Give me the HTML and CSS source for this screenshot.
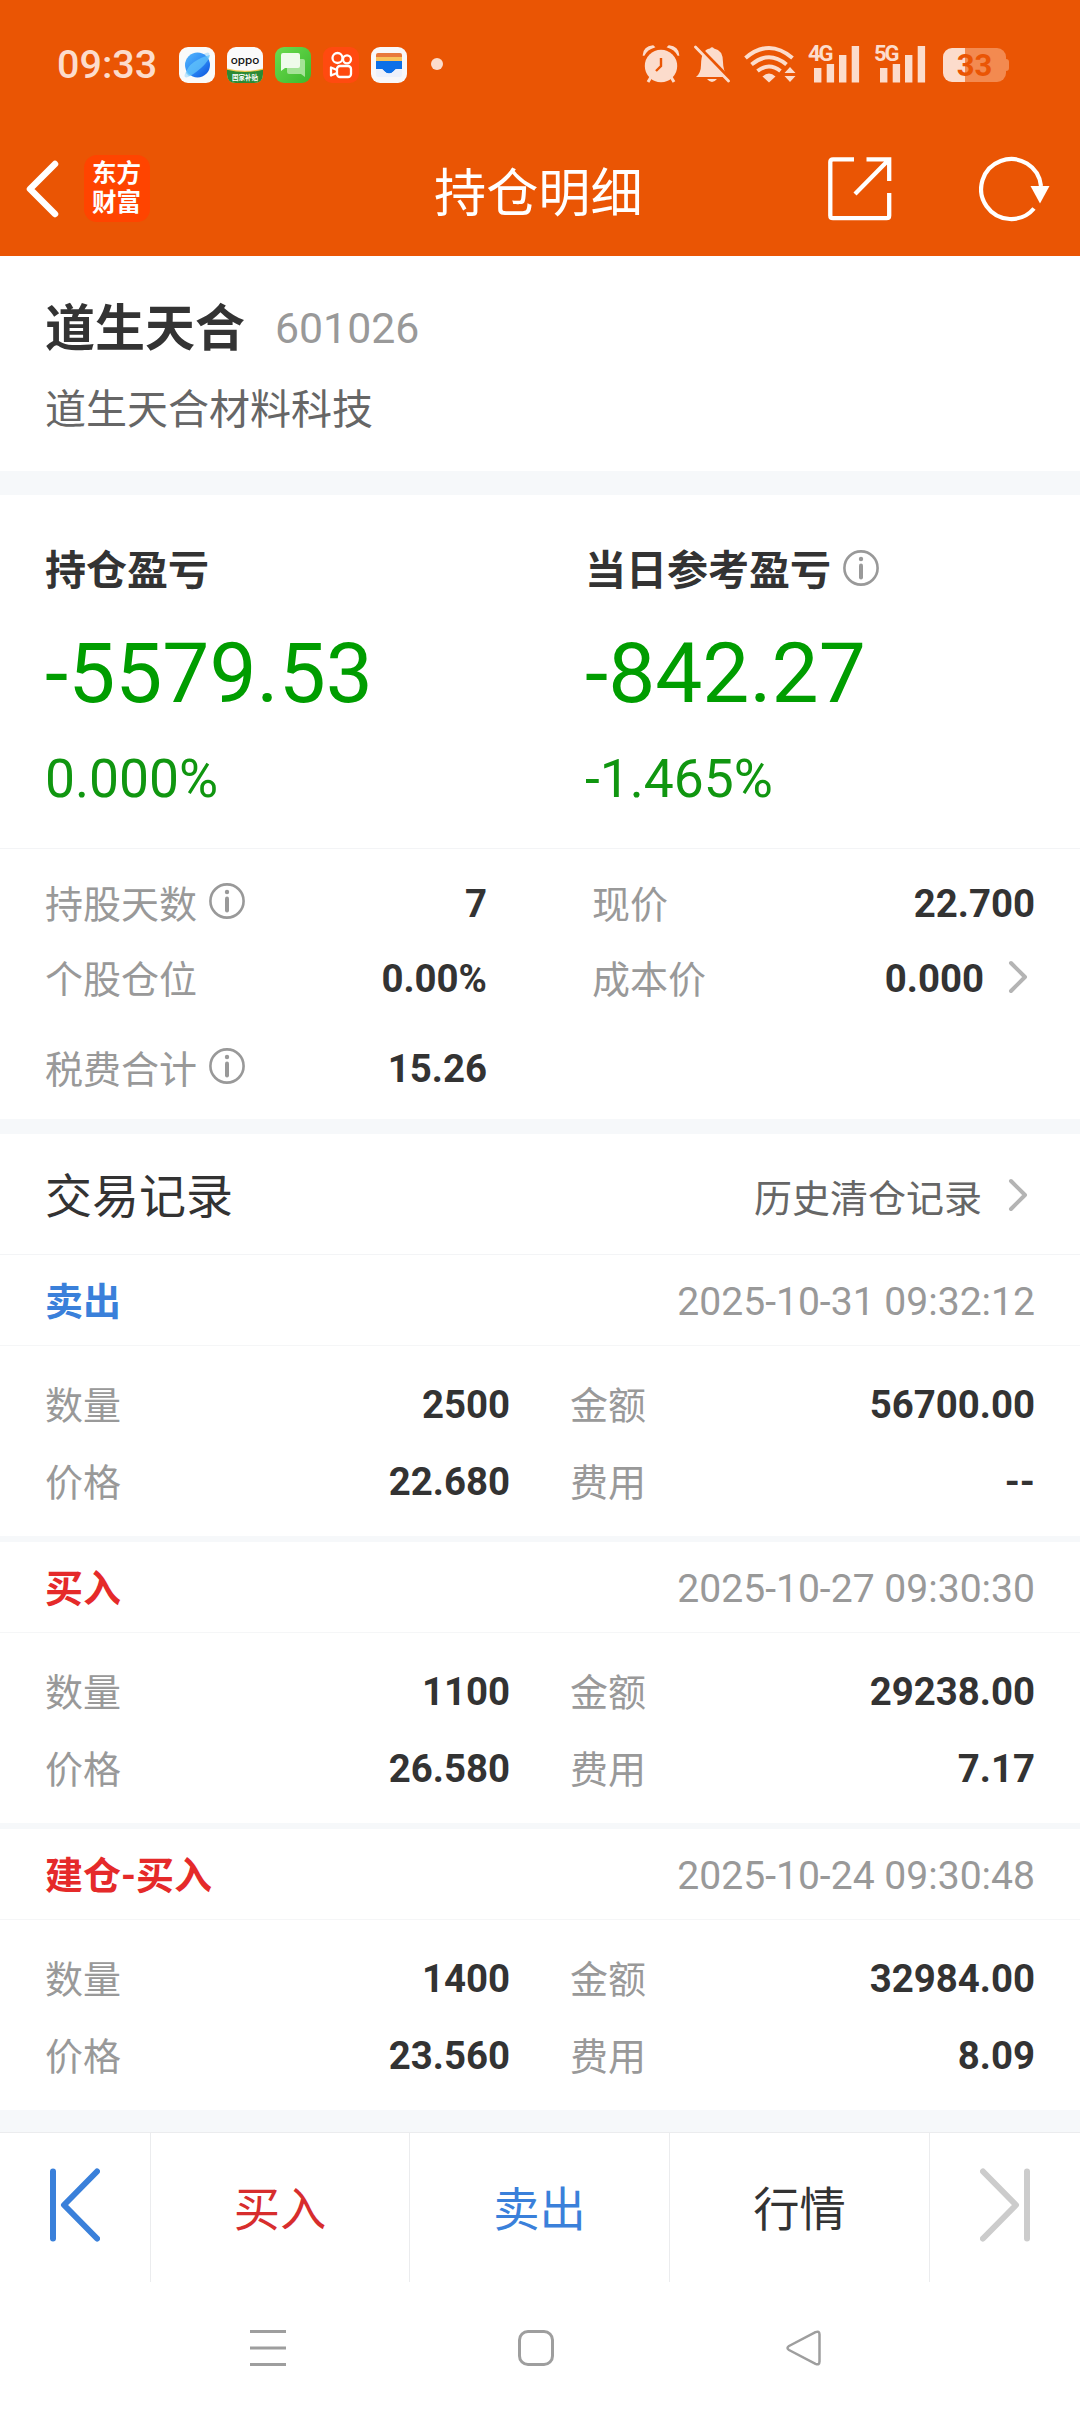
FILE: index.html
```html
<!DOCTYPE html>
<html lang="zh-CN">
<head>
<meta charset="utf-8">
<title>持仓明细</title>
<link rel="stylesheet" href="styles.css">
</head>
<body>
<svg width="0" height="0" class="defs">
  <symbol id="info" viewBox="0 0 36 36"><circle cx="18" cy="18" r="16.6" fill="none" stroke="#999" stroke-width="2.6"/><circle cx="18" cy="9" r="2.2" fill="#999"/><path d="M18 15.5v12" stroke="#999" stroke-width="4" stroke-linecap="round"/></symbol>
  <symbol id="more" viewBox="0 0 20 34"><path d="M3 3l14 14L3 31" fill="none" stroke="#b4b4b4" stroke-width="4" stroke-linecap="round" stroke-linejoin="round"/></symbol>
  <symbol id="bars" viewBox="0 0 52 38"><path d="M6 23h7.4v14.5H6zM18.700 19h7.400v18.500h-7.400zM31 10h7.400v27.500H31zM43.700 1h7.400v36.500h-7.400z" fill="#fcdccc"/></symbol>
</svg>
<header class="top">
  <div class="status">
    <span class="clock">09:33</span>
    <div class="apps">
      <svg width="36" height="36" viewBox="0 0 36 36"><defs><linearGradient id="pl" x1="0" y1="0" x2="1" y2="1"><stop offset="0" stop-color="#58b8fb"/><stop offset=".5" stop-color="#2f8df6"/><stop offset="1" stop-color="#0a4fdc"/></linearGradient></defs><rect width="36" height="36" rx="9" fill="#fafafa"/><ellipse cx="18" cy="18" rx="17" ry="4.500" transform="rotate(-45 18 18)" fill="#c3e5fb"/><circle cx="18.500" cy="18" r="12.500" fill="url(#pl)"/><path d="M7 26Q8 20 15 15T31 8Q30 14 22 21T10 29z" fill="#63c4fb" opacity=".75"/></svg>
      <svg width="36" height="36" viewBox="0 0 36 36"><rect width="36" height="36" rx="9" fill="#fafafa"/><path d="M0 21.500Q18 26 36 21.500V27q0 9-9 9H9q-9 0-9-9z" fill="#f0c84c"/><path d="M0 22.700Q18 27.200 36 22.700V27q0 9-9 9H9q-9 0-9-9z" fill="#2c8a34"/><text transform="translate(3.700 16.800) scale(1.300 1)" textLength="22" lengthAdjust="spacingAndGlyphs" class="oppo">oppo</text><text x="5" y="33" textLength="26" class="subsidy">国家补贴</text></svg>
      <svg width="36" height="36" viewBox="0 0 36 36"><defs><linearGradient id="gr" x1="0" y1="0" x2="1" y2="1"><stop offset="0" stop-color="#6cdc50"/><stop offset="1" stop-color="#3cb82c"/></linearGradient></defs><rect width="36" height="36" rx="9" fill="url(#gr)"/><path d="M14 12h14q2 0 2 2v16l-4-3H14q-2 0-2-2V14q0-2 2-2z" fill="#a5e396"/><path d="M8 6h15q2 0 2 2v11q0 2-2 2H10l-4 3V8q0-2 2-2z" fill="#effbea"/></svg>
      <svg width="36" height="36" viewBox="0 0 36 36"><rect width="36" height="36" rx="9" fill="#ff4a10"/><g fill="none" stroke="#fff" stroke-width="2.300" stroke-linejoin="round"><circle cx="14.500" cy="11" r="5"/><circle cx="24" cy="12.300" r="4"/><rect x="14" y="19" width="14" height="11" rx="3"/><path d="M14 23l-6-2.500v8l6-2.500"/></g></svg>
      <svg width="36" height="36" viewBox="0 0 36 36"><rect width="36" height="36" rx="9" fill="#f8f8fa"/><path d="M5 10V8q0-2 2-2h22q2 0 2 2v2z" fill="#e8793c"/><path d="M5 10h26v4H5z" fill="#f8c35c"/><path d="M5 14h26v8h-5q-2 0-3 2-5 5-10 0-1-2-3-2H5z" fill="#0c70e8"/><path d="M5 22h5q2 0 3 2 5 5 10 0 1-2 3-2h5v6q0 2-2 2H7q-2 0-2-2z" fill="#edf1fb"/></svg>
    </div>
    <i class="dot"></i>
    <svg class="alarm" width="38" height="38" viewBox="0 0 38 38"><g fill="#fcdccc"><circle cx="19" cy="21" r="16.200"/><path d="M1.500 10Q2 2 11 1L12 2Q5 4 2 10zM36.500 10Q36 2 27 1L26 2q7 2 10 8z" stroke="#fcdccc" stroke-width="1.500"/><path d="M9 32l-3 5M29 32l3 5" stroke="#fcdccc" stroke-width="3"/></g><path d="M19 13v8l-5 5" fill="none" stroke="#ea5504" stroke-width="2.400"/></svg>
    <svg class="bell" width="36" height="38" viewBox="0 0 36 38"><g fill="#fcdccc"><path d="M2 32q5-4 5-12 0-15 9-16.500Q18 1 20 3.500 29 5 29 17q0 9 5 15zM13 34h10q-5 6-10 0z"/></g><path d="M1.500 -1l35 36" stroke="#ea5504" stroke-width="4"/><path d="M1.500 2l33 34" stroke="#fcdccc" stroke-width="2.800" stroke-linecap="round"/></svg>
    <svg class="wifi" width="52" height="38" viewBox="0 0 52 38"><g fill="none" stroke="#fcdccc" stroke-width="4"><path d="M1.500 13Q25 -7 48.500 13M7.500 19.500Q25 5 42.500 19.500M13.500 26Q25 17 36.500 26"/></g><path d="M18.500 31.500q6.500-6 13 0L25 37.500zM40.500 28l5.500-6 5.500 6zM40.500 31h11L46 37z" fill="#fcdccc"/></svg>
    <div class="signal"><span>4G</span><svg width="52" height="38"><use href="#bars"/></svg></div>
    <div class="signal"><span>5G</span><svg width="52" height="38"><use href="#bars"/></svg></div>
    <div class="battery"><span>33</span></div>
  </div>
  <nav class="nav">
    <svg class="back" width="36" height="60" viewBox="0 0 36 60"><path d="M30 5L5 30l25 25" fill="none" stroke="#fff" stroke-width="6.500" stroke-linecap="round" stroke-linejoin="round"/></svg>
    <div class="logo">东方<br>财富</div>
    <h1>持仓明细</h1>
    <svg class="share" width="64" height="64" viewBox="0 0 64 64"><path d="M26 2.300H5q-2.700 0-2.700 2.700v53.500q0 2.700 2.700 2.700h53.500q2.700 0 2.700-2.700V36M38.500 2.300h22.700V24M61 2.500L27 37" fill="none" stroke="#fff" stroke-width="4.300"/></svg>
    <svg class="refresh" width="72" height="66" viewBox="0 0 72 66"><path d="M55 52.500A30 30 0 1 1 62 30" fill="none" stroke="#fff" stroke-width="4.200"/><path d="M51.500 30h19L61 47.500z" fill="#fff"/></svg>
  </nav>
</header>
<main>
  <section class="stock">
    <div class="name"><h2>道生天合</h2><span>601026</span></div>
    <p>道生天合材料科技</p>
  </section>
  <section class="profit">
    <div><h3>持仓盈亏</h3><p class="big">-5579.53</p><p class="pct">0.000%</p></div>
    <div><h3>当日参考盈亏<svg width="36" height="36"><use href="#info"/></svg></h3><p class="big">-842.27</p><p class="pct">-1.465%</p></div>
  </section>
  <section class="facts">
    <div class="row"><span>持股天数<svg width="36" height="36"><use href="#info"/></svg></span><b>7</b></div>
    <div class="row"><span>现价</span><b>22.700</b></div>
    <div class="row"><span>个股仓位</span><b>0.00%</b></div>
    <div class="row link"><span>成本价</span><b>0.000</b><svg width="20" height="34"><use href="#more"/></svg></div>
    <div class="row"><span>税费合计<svg width="36" height="36"><use href="#info"/></svg></span><b>15.26</b></div>
  </section>
  <section class="records">
    <h2>交易记录</h2>
    <a>历史清仓记录<svg width="20" height="34"><use href="#more"/></svg></a>
  </section>
  <article class="trade">
    <header><h3 class="sell">卖出</h3><time>2025-10-31 09:32:12</time></header>
    <div class="detail">
      <div class="row"><span>数量</span><b>2500</b></div><div class="row"><span>金额</span><b>56700.00</b></div>
      <div class="row"><span>价格</span><b>22.680</b></div><div class="row"><span>费用</span><b>--</b></div>
    </div>
  </article>
  <article class="trade">
    <header><h3>买入</h3><time>2025-10-27 09:30:30</time></header>
    <div class="detail">
      <div class="row"><span>数量</span><b>1100</b></div><div class="row"><span>金额</span><b>29238.00</b></div>
      <div class="row"><span>价格</span><b>26.580</b></div><div class="row"><span>费用</span><b>7.17</b></div>
    </div>
  </article>
  <article class="trade">
    <header><h3>建仓-买入</h3><time>2025-10-24 09:30:48</time></header>
    <div class="detail">
      <div class="row"><span>数量</span><b>1400</b></div><div class="row"><span>金额</span><b>32984.00</b></div>
      <div class="row"><span>价格</span><b>23.560</b></div><div class="row"><span>费用</span><b>8.09</b></div>
    </div>
  </article>
</main>
<footer class="actions">
  <div><svg width="50" height="74" viewBox="0 0 50 74"><path d="M3 3.500v67M47 3.500L14 37l33 33.500" fill="none" stroke="#3a80da" stroke-width="6" stroke-linecap="round" stroke-linejoin="round"/></svg></div>
  <div class="buy">买入</div>
  <div class="sell">卖出</div>
  <div>行情</div>
  <div><svg width="50" height="74" viewBox="0 0 50 74"><path d="M47 3.500v67M3 3.500L36 37 3 70.500" fill="none" stroke="#ccc" stroke-width="6" stroke-linecap="round" stroke-linejoin="round"/></svg></div>
</footer>
<nav class="system">
  <svg width="36" height="36" viewBox="0 0 36 36"><path d="M0 1.500h36M0 18h36M0 34.500h36" stroke="#9e9e9e" stroke-width="3"/></svg>
  <svg width="36" height="36" viewBox="0 0 36 36"><rect x="1.500" y="1.500" width="33" height="33" rx="8.500" fill="none" stroke="#9e9e9e" stroke-width="3"/></svg>
  <svg width="36" height="36" viewBox="0 0 36 36"><path d="M29.500 2.200Q33.500 .5 33.500 4.500v27q0 4-4 2.300L3 20Q0 18 3 16z" fill="none" stroke="#9e9e9e" stroke-width="2.500" stroke-linejoin="round"/></svg>
</nav>
</body>
</html>
```
FILE: styles.css
```css
* { box-sizing: border-box; }
body { margin: 0; width: 1080px; height: 2414px; overflow: hidden; background: #fff; color: #333; font-family: Roboto, "Noto Sans CJK SC", sans-serif; }
h1, h2, h3, p { margin: 0; }
svg { display: block; flex: none; }
.defs { position: absolute; }

.top { height: 256px; background: #ea5504; color: #fff; }
.status { height: 121px; padding: 7px 0 0 57px; display: flex; align-items: center; }
.clock { width: 122px; font-size: 39.5px; font-weight: 500; color: #fcdccc; }
.apps { display: flex; gap: 12px; margin-top: 2px; }
.oppo { font: 500 10.5px Inter, sans-serif; fill: #111; }
.subsidy { font: 700 6.5px "Noto Sans CJK SC", sans-serif; fill: #fff; }
.dot { width: 12px; height: 12px; border-radius: 50%; background: #fcdccc; margin: 0 199px 0 24px; }
.bell { margin-left: 14px; }
.wifi { margin-left: 14px; }
.signal { position: relative; margin-left: 12px; }
.signal + .signal { margin-left: 14px; }
.signal span { position: absolute; left: 0; top: -2px; font: 700 22px/22px Roboto, sans-serif; letter-spacing: -2px; color: #fcdccc; }
.battery { position: relative; margin: 2px 0 0 17px; width: 63px; height: 34px; border-radius: 9px; background: linear-gradient(90deg, #fcdccc 22px, #f38a50 22px); color: #ea5504; font: 700 31px/36px Roboto, sans-serif; text-align: center; }
.battery::after { content: ""; position: absolute; left: 63px; top: 11px; width: 3px; height: 12px; border-radius: 0 3px 3px 0; background: #f38a50; }

.nav { height: 135px; display: flex; align-items: center; }
.back { margin-left: 25px; }
.logo { margin-left: 23px; width: 66px; height: 67px; border-radius: 13px; background: #f40; font: 700 24.5px/29px "Noto Sans CJK SC", sans-serif; text-align: center; padding: 2px 1px 0 0; }
.nav h1 { margin-left: 284px; width: 209px; font-size: 52.2px; font-weight: 400; white-space: nowrap; }
.share { margin-left: 185px; }
.refresh { margin-left: 87px; }

.stock { height: 239px; padding: 36px 45px 0; border-bottom: 24px solid #f6f8fa; }
.name { display: flex; height: 74px; align-items: center; }
.name h2 { font-size: 50px; line-height: 74px; }
.name span { margin: -3px 0 0 30px; font-size: 42.8px; color: #999; }
.stock p { font-size: 41px; line-height: 60px; margin-top: 14px; color: #666; }

.profit { height: 354px; border-bottom: 1px solid #f3f4f6; padding: 46px 0 0 45px; display: grid; grid-template-columns: 540px 1fr; }
.profit h3 { font-size: 41px; line-height: 60px; display: flex; align-items: center; }
.profit h3 svg { margin: -6px 0 0 12px; }
.big { font-size: 83.8px; line-height: 100px; margin-top: 22px; color: #009d00; }
.pct { font-size: 53.4px; line-height: 64px; margin-top: 24px; color: #109610; }

.facts { height: 285px; padding: 17px 45px 0; display: grid; grid-template-columns: 442px 443px; column-gap: 105px; grid-template-rows: 75px 75px 105px; border-bottom: 15px solid #f6f8fa; }
.row { display: flex; justify-content: space-between; align-items: center; font-size: 38px; color: #999; }
.row span { display: flex; align-items: center; padding-bottom: 5px; }
.row span svg { margin: 0 0 0 12px; }
.row b { color: #333; font-size: 38.4px; }
.link b { margin-left: auto; }
.link svg { margin: -4px 7px 0 24px; }

.records { height: 121px; border-bottom: 1px solid #f3f4f6; padding: 0 52px 0 45px; display: flex; align-items: center; justify-content: space-between; }
.records h2 { font-size: 47px; font-weight: 400; padding-bottom: 4px; }
.records a { display: flex; align-items: center; font-size: 38px; color: #666; padding-top: 3px; }
.records a svg { margin: -2px 0 0 26px; }

.trade { height: 287px; border-bottom: 6px solid #f6f8fa; }
.trade:last-child { height: 281px; border-bottom: 0; }
.trade header { height: 91px; padding: 0 45px; border-bottom: 1px solid #f5f6f7; display: flex; align-items: center; justify-content: space-between; }
.trade h3 { font-size: 38px; color: #e52a2a; padding-bottom: 3px; }
.trade .sell { color: #3a80da; }
.trade time { font-size: 39.1px; color: #999; padding-top: 3px; }
.detail { padding: 20px 45px 0; display: grid; grid-template-columns: 465px 465px; grid-auto-rows: 77px; column-gap: 60px; }

.actions { height: 172px; border-top: 22px solid #f6f8fa; display: grid; grid-template-columns: 150px 259px 260px 260px 151px; font-size: 46.3px; }
.actions div { display: flex; align-items: center; justify-content: center; border-left: 1px solid #ebecee; border-top: 1px solid #ebecee; padding-bottom: 5px; }
.actions div:first-child { border-left: 0; }
.actions .buy { color: #d72d2d; }
.actions .sell { color: #3a80da; }
.system { height: 132px; padding: 48px 0 0 250px; display: flex; gap: 232px; }
```
